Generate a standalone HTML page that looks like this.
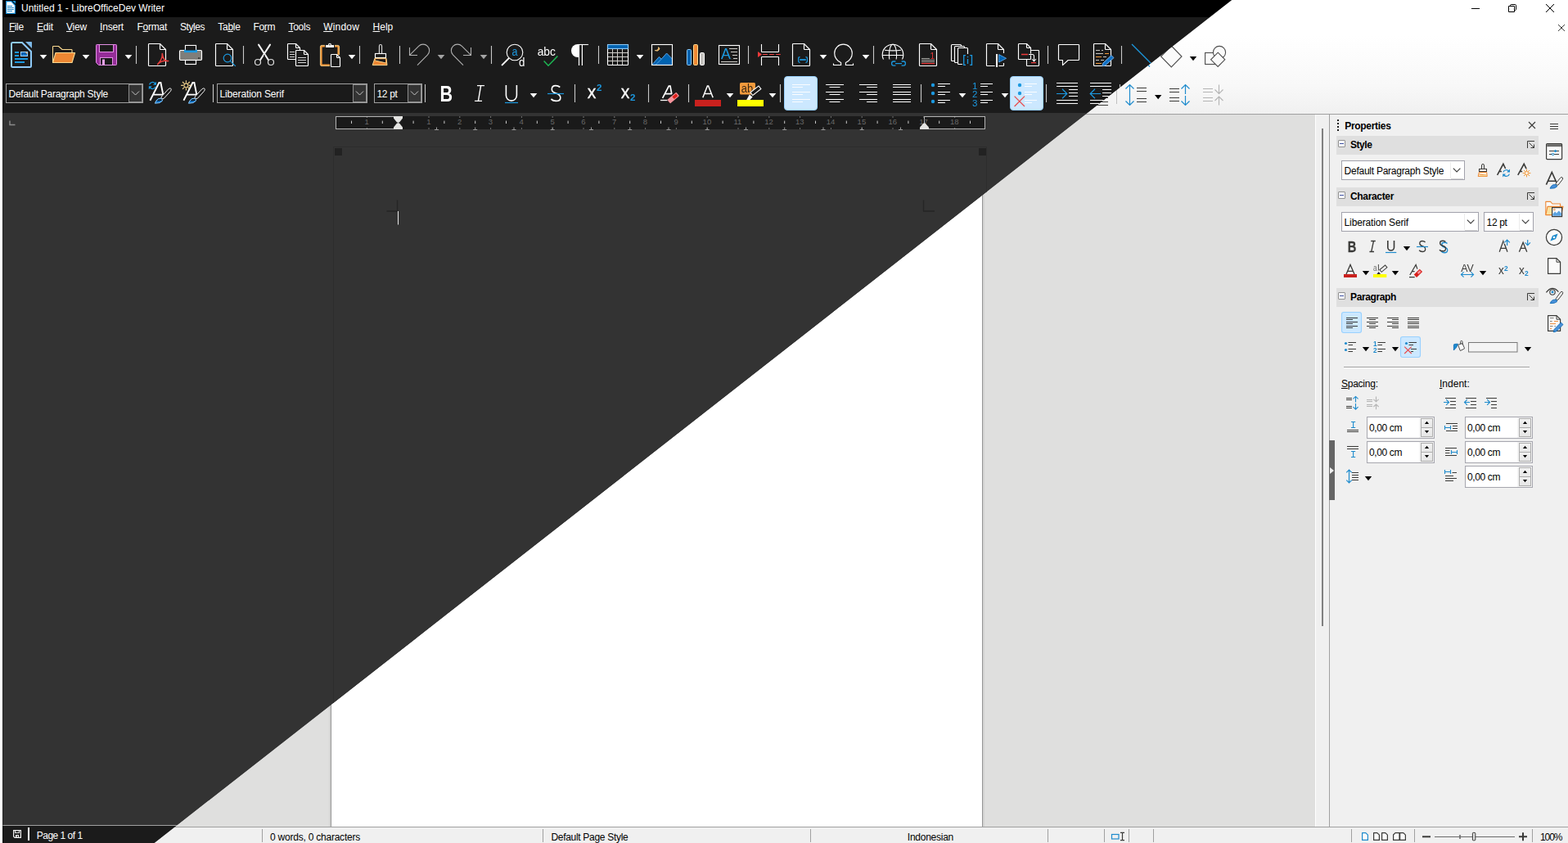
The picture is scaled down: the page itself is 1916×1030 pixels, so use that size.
<!DOCTYPE html>
<html lang="en"><head><meta charset="utf-8"><title>Untitled 1 - LibreOfficeDev Writer</title>
<style>
html,body{margin:0;padding:0;background:#f0f0f0;}
body{width:1916px;height:1030px;overflow:hidden;position:relative;font:12px/16px "Liberation Sans", sans-serif;}
.layer{position:absolute;left:0;top:0;width:1916px;height:1030px;overflow:hidden;}
#dark{clip-path:polygon(3px 0px, 1505px 0px, 188.4px 1030px, 3px 1030px);background:#333;}
#light{background:#f0f0f0;}
.b{position:absolute;}
.t{position:absolute;white-space:pre;font:12px/16px "Liberation Sans", sans-serif;}
.t u{text-decoration:underline;text-underline-offset:1px;text-decoration-thickness:1px;}
svg.ic{position:absolute;left:0;top:0;will-change:transform;}
</style></head><body>
<div class="layer" id="light">
<div class="b" style="left:0px;top:0px;width:1916px;height:24px;background:#fff;"></div>
<div class="b" style="left:0px;top:24px;width:1916px;height:115px;background:linear-gradient(#fff 0%,#fff 17%,#fbfbfb 49%,#f8f8f8 70%,#f4f4f4 86%,#f0f0f0 100%);"></div>
<div class="b" style="left:0px;top:139px;width:1916px;height:1px;background:#a0a0a0;"></div>
<div class="b" style="left:0px;top:140px;width:1607px;height:870px;background:#dfdfde;"></div>
<div class="b" style="left:1607px;top:140px;width:1px;height:870px;background:#fff;"></div>
<div class="b" style="left:1608px;top:140px;width:16px;height:870px;background:#f0f0f0;"></div>
<div class="b" style="left:1624px;top:140px;width:1px;height:870px;background:#a0a0a0;"></div>
<div class="b" style="left:1615px;top:157px;width:2px;height:608px;background:#808080;"></div>
<div class="b" style="left:1625px;top:140px;width:291px;height:870px;background:#f0f0f0;"></div>
<div class="b" style="left:0px;top:1010px;width:1916px;height:1px;background:#a0a0a0;"></div>
<div class="b" style="left:0px;top:1011px;width:1916px;height:19px;background:#f0f0f0;"></div>
<div class="b" style="left:402px;top:180px;width:2px;height:830px;background:#d3d3d2;"></div>
<div class="b" style="left:1201px;top:180px;width:2px;height:830px;background:#d3d3d2;"></div>
<div class="b" style="left:404px;top:180px;width:797px;height:830px;background:#fff;border:1px solid #959595;box-sizing:border-box;border-bottom:none;"></div>
<div class="b" style="left:1633px;top:166px;width:247px;height:23px;background:#dfdfdf;"></div>
<div class="b" style="left:1635px;top:171px;width:9px;height:9px;background:#fff;border:1px solid #909090;box-sizing:border-box;border-radius:1px;"></div>
<div class="b" style="left:1637px;top:175px;width:5px;height:1px;background:#3b4fa0;"></div>
<div class="b" style="left:1633px;top:229px;width:247px;height:23px;background:#dfdfdf;"></div>
<div class="b" style="left:1635px;top:234px;width:9px;height:9px;background:#fff;border:1px solid #909090;box-sizing:border-box;border-radius:1px;"></div>
<div class="b" style="left:1637px;top:238px;width:5px;height:1px;background:#3b4fa0;"></div>
<div class="b" style="left:1633px;top:352px;width:247px;height:23px;background:#dfdfdf;"></div>
<div class="b" style="left:1635px;top:357px;width:9px;height:9px;background:#fff;border:1px solid #909090;box-sizing:border-box;border-radius:1px;"></div>
<div class="b" style="left:1637px;top:361px;width:5px;height:1px;background:#3b4fa0;"></div>
<div class="b" style="left:1639px;top:196px;width:151px;height:24px;background:#fff;border:1px solid #a2a2ac;box-sizing:border-box;"></div>
<div class="b" style="left:1772px;top:198px;width:1px;height:20px;background:#ececec;"></div>
<div class="b" style="left:1773px;top:218px;width:15px;height:1px;background:#d4d4d4;"></div>
<div class="b" style="left:1639px;top:259px;width:168px;height:24px;background:#fff;border:1px solid #a2a2ac;box-sizing:border-box;"></div>
<div class="b" style="left:1789px;top:261px;width:1px;height:20px;background:#ececec;"></div>
<div class="b" style="left:1790px;top:281px;width:15px;height:1px;background:#d4d4d4;"></div>
<div class="b" style="left:1813px;top:259px;width:61px;height:24px;background:#fff;border:1px solid #a2a2ac;box-sizing:border-box;"></div>
<div class="b" style="left:1856px;top:261px;width:1px;height:20px;background:#ececec;"></div>
<div class="b" style="left:1857px;top:281px;width:15px;height:1px;background:#d4d4d4;"></div>
<div class="b" style="left:1670px;top:509px;width:83px;height:27px;background:#fff;border:1px solid #a6a6ae;box-sizing:border-box;"></div>
<div class="b" style="left:1734px;top:510px;width:18px;height:25px;background:#f3f3f3;"></div>
<div class="b" style="left:1736px;top:511px;width:15px;height:12px;border:1px solid #adadad;box-sizing:border-box;background:linear-gradient(#f2f2f2,#e8e8e8);"></div>
<div class="b" style="left:1736px;top:522px;width:15px;height:12px;border:1px solid #adadad;box-sizing:border-box;background:linear-gradient(#f0f0f0,#e6e6e6);"></div>
<div class="b" style="left:1670px;top:539px;width:83px;height:27px;background:#fff;border:1px solid #a6a6ae;box-sizing:border-box;"></div>
<div class="b" style="left:1734px;top:540px;width:18px;height:25px;background:#f3f3f3;"></div>
<div class="b" style="left:1736px;top:541px;width:15px;height:12px;border:1px solid #adadad;box-sizing:border-box;background:linear-gradient(#f2f2f2,#e8e8e8);"></div>
<div class="b" style="left:1736px;top:552px;width:15px;height:12px;border:1px solid #adadad;box-sizing:border-box;background:linear-gradient(#f0f0f0,#e6e6e6);"></div>
<div class="b" style="left:1790px;top:509px;width:83px;height:27px;background:#fff;border:1px solid #a6a6ae;box-sizing:border-box;"></div>
<div class="b" style="left:1854px;top:510px;width:18px;height:25px;background:#f3f3f3;"></div>
<div class="b" style="left:1856px;top:511px;width:15px;height:12px;border:1px solid #adadad;box-sizing:border-box;background:linear-gradient(#f2f2f2,#e8e8e8);"></div>
<div class="b" style="left:1856px;top:522px;width:15px;height:12px;border:1px solid #adadad;box-sizing:border-box;background:linear-gradient(#f0f0f0,#e6e6e6);"></div>
<div class="b" style="left:1790px;top:539px;width:83px;height:27px;background:#fff;border:1px solid #a6a6ae;box-sizing:border-box;"></div>
<div class="b" style="left:1854px;top:540px;width:18px;height:25px;background:#f3f3f3;"></div>
<div class="b" style="left:1856px;top:541px;width:15px;height:12px;border:1px solid #adadad;box-sizing:border-box;background:linear-gradient(#f2f2f2,#e8e8e8);"></div>
<div class="b" style="left:1856px;top:552px;width:15px;height:12px;border:1px solid #adadad;box-sizing:border-box;background:linear-gradient(#f0f0f0,#e6e6e6);"></div>
<div class="b" style="left:1790px;top:569px;width:83px;height:27px;background:#fff;border:1px solid #a6a6ae;box-sizing:border-box;"></div>
<div class="b" style="left:1854px;top:570px;width:18px;height:25px;background:#f3f3f3;"></div>
<div class="b" style="left:1856px;top:571px;width:15px;height:12px;border:1px solid #adadad;box-sizing:border-box;background:linear-gradient(#f2f2f2,#e8e8e8);"></div>
<div class="b" style="left:1856px;top:582px;width:15px;height:12px;border:1px solid #adadad;box-sizing:border-box;background:linear-gradient(#f0f0f0,#e6e6e6);"></div>
<div class="b" style="left:1624px;top:538px;width:7px;height:73px;background:#666;"></div>
<div class="b" style="left:320px;top:1013px;width:1px;height:16px;background:#a0a0a0;"></div>
<div class="b" style="left:663px;top:1013px;width:1px;height:16px;background:#a0a0a0;"></div>
<div class="b" style="left:990px;top:1013px;width:1px;height:16px;background:#a0a0a0;"></div>
<div class="b" style="left:1280px;top:1013px;width:1px;height:16px;background:#a0a0a0;"></div>
<div class="b" style="left:1349px;top:1013px;width:1px;height:16px;background:#a0a0a0;"></div>
<div class="b" style="left:1379px;top:1013px;width:1px;height:16px;background:#a0a0a0;"></div>
<div class="b" style="left:1409px;top:1013px;width:1px;height:16px;background:#a0a0a0;"></div>
<div class="b" style="left:1651px;top:1013px;width:1px;height:16px;background:#a0a0a0;"></div>
<div class="b" style="left:1728px;top:1013px;width:1px;height:16px;background:#a0a0a0;"></div>
<div class="b" style="left:1872px;top:1013px;width:1px;height:16px;background:#a0a0a0;"></div>
<div class="b" style="left:1642px;top:448px;width:227px;height:1px;background:#a0a0a0;"></div>
<div class="b" style="left:1642px;top:449px;width:227px;height:1px;background:#fff;"></div>
<span class="t" style="left:1643.2px;top:145.74px;color:#000;letter-spacing:-0.296px;font-weight:bold;">Properties</span>
<span class="t" style="left:1650px;top:168.84px;color:#000;letter-spacing:-0.438px;font-weight:bold;">Style</span>
<span class="t" style="left:1650px;top:231.84px;color:#000;letter-spacing:-0.337px;font-weight:bold;">Character</span>
<span class="t" style="left:1650px;top:354.84px;color:#000;letter-spacing:-0.373px;font-weight:bold;">Paragraph</span>
<span class="t" style="left:1642.6px;top:200.84px;color:#000;letter-spacing:-0.257px;">Default Paragraph Style</span>
<span class="t" style="left:1642.6px;top:263.84px;color:#000;letter-spacing:-0.145px;">Liberation Serif</span>
<span class="t" style="left:1816.6px;top:263.84px;color:#000;letter-spacing:-0.341px;">12 pt</span>
<span class="t" style="left:1639px;top:460.84px;color:#000;letter-spacing:-0.250px;"><u>S</u>pacing:</span>
<span class="t" style="left:1759px;top:460.84px;color:#000;letter-spacing:0.014px;"><u>I</u>ndent:</span>
<span class="t" style="left:1673px;top:514.84px;color:#000;letter-spacing:-0.384px;">0,00 cm</span>
<span class="t" style="left:1673px;top:544.84px;color:#000;letter-spacing:-0.384px;">0,00 cm</span>
<span class="t" style="left:1793px;top:514.84px;color:#000;letter-spacing:-0.384px;">0,00 cm</span>
<span class="t" style="left:1793px;top:544.84px;color:#000;letter-spacing:-0.384px;">0,00 cm</span>
<span class="t" style="left:1793px;top:574.84px;color:#000;letter-spacing:-0.384px;">0,00 cm</span>
<span class="t" style="left:330px;top:1014.54px;color:#000;letter-spacing:-0.225px;">0 words, 0 characters</span>
<span class="t" style="left:673.4px;top:1014.54px;color:#000;letter-spacing:-0.300px;">Default Page Style</span>
<span class="t" style="left:1108.8px;top:1014.54px;color:#000;letter-spacing:-0.252px;">Indonesian</span>
<span class="t" style="left:1882px;top:1014.54px;color:#000;letter-spacing:-1.076px;">100%</span>
<svg class="ic" width="1916" height="1030" viewBox="0 0 1916 1030">
<path d="M1775.8 205.6l4.3 4.3l4.3 -4.3" fill="none" stroke="#3c3c3c" stroke-width="1.1" />
<path d="M1792.8 268.6l4.3 4.3l4.3 -4.3" fill="none" stroke="#3c3c3c" stroke-width="1.1" />
<path d="M1859.8 268.6l4.3 4.3l4.3 -4.3" fill="none" stroke="#3c3c3c" stroke-width="1.1" />
<path d="M1740.9 518h5.2l-2.6 -3.2z" fill="#000" />
<path d="M1740.9 526h5.2l-2.6 3.2z" fill="#000" />
<path d="M1740.9 548h5.2l-2.6 -3.2z" fill="#000" />
<path d="M1740.9 556h5.2l-2.6 3.2z" fill="#000" />
<path d="M1860.9 518h5.2l-2.6 -3.2z" fill="#000" />
<path d="M1860.9 526h5.2l-2.6 3.2z" fill="#000" />
<path d="M1860.9 548h5.2l-2.6 -3.2z" fill="#000" />
<path d="M1860.9 556h5.2l-2.6 3.2z" fill="#000" />
<path d="M1860.9 578h5.2l-2.6 -3.2z" fill="#000" />
<path d="M1860.9 586h5.2l-2.6 3.2z" fill="#000" />
<path d="M1625 571l5 4l-5 4z" fill="#f0f0f0" />
<path d="M1798 10.5H1808" fill="none" stroke="#000" stroke-width="1" />
<path d="M1843.5 7.5H1850.5V14.5H1843.5Z M1845.5 7.5V6.6Q1845.5 5.5 1846.6 5.5H1851.4Q1852.5 5.5 1852.5 6.6V11.4Q1852.5 12.5 1851.4 12.5H1850.5" fill="none" stroke="#000" stroke-width="1" stroke-linejoin="round"/>
<path d="M1889 5L1899 15M1899 5L1889 15" fill="none" stroke="#000" stroke-width="1" />
<path d="M1904 30L1912 38M1912 30L1904 38" fill="none" stroke="#3a3a38" stroke-width="1" />
<path d="M1379.5 56L1405 81.5" stroke="#1e8bcd" stroke-width="1.2" fill="none" />
<path d="M1431.3 56L1444 69L1431.3 82L1418.6 69Z" fill="#fafafa" stroke="#4d4d4d" stroke-width="1.1" />
<path d="M1453.8 69h8.4l-4.2 5.2z" fill="#000"/>
<rect x="1472.6" y="64.5" width="13" height="14" fill="#fafafa" stroke="#4d4d4d" stroke-width="1.1" />
<circle cx="1490" cy="64" r="7.6" fill="#fafafa" stroke="#4d4d4d" stroke-width="1.1" />
<path d="M1488.2 64.2L1496.8 72.8L1488.2 81.4L1479.6 72.8Z" fill="#fafafa" stroke="#4d4d4d" stroke-width="1.1" />
<path d="M1364.5 105L1364.5 127" stroke="#c0c0c0" stroke-width="1" fill="none" />
<path d="M1329 103.5H1354M1329 107.5H1354M1344 111.5H1354M1344 115.5H1354M1344 119.5H1354M1329 124.5H1354M1329 128.5H1354" fill="none" stroke="#3a3a38" stroke-width="1.1" />
<path d="M1342 116.5H1329.5 M1335 110.8L1329.2 116.5L1335 122.2" fill="none" stroke="#1e8bcd" stroke-width="1.2" />
<path d="M1380.5 103.5V128.5 M1375.5 108.5L1380.5 103.5L1385.5 108.5 M1375.5 123.5L1380.5 128.5L1385.5 123.5" fill="none" stroke="#1e8bcd" stroke-width="1.2" />
<path d="M1389 107.5H1401M1389 111.5H1401M1389 120.5H1401M1389 124.5H1401" fill="none" stroke="#3a3a38" stroke-width="1.1" />
<path d="M1411.0 116h8.4l-4.2 5.2z" fill="#000"/>
<path d="M1429 108.5H1441M1429 112.5H1441M1429 119.5H1441M1429 123.5H1441" fill="none" stroke="#3a3a38" stroke-width="1.1" />
<path d="M1448.5 103.5V115 M1443.5 108.5L1448.5 103.5L1453.5 108.5 M1448.5 117V128.5 M1443.5 123.5L1448.5 128.5L1453.5 123.5" fill="none" stroke="#1e8bcd" stroke-width="1.2" />
<path d="M1470 108.5H1482M1470 112.5H1482M1470 119.5H1482M1470 123.5H1482" fill="none" stroke="#b4b4b4" stroke-width="1.1" />
<path d="M1489.5 103.5V114.5 M1484.5 109.5L1489.5 114.5L1494.5 109.5 M1489.5 118V128.5 M1484.5 123L1489.5 118L1494.5 123" fill="none" stroke="#b4b4b4" stroke-width="1.1" />
<rect x="1634" y="146" width="2" height="2" fill="#222" />
<rect x="1634" y="150" width="2" height="2" fill="#222" />
<rect x="1634" y="154" width="2" height="2" fill="#222" />
<rect x="1634" y="158" width="2" height="2" fill="#222" />
<path d="M1868 149L1876 157M1876 149L1868 157" fill="none" stroke="#3a3a38" stroke-width="1.1" />
<path d="M1894 151.5H1904M1894 154.5H1904M1894 157.5H1904" fill="none" stroke="#3a3a38" stroke-width="1.1" />
<path d="M1866.5 181V172.5H1875 M1868.5 174.5L1874.5 180.5 M1870.5 180.5H1874.5V176.5" fill="none" stroke="#3a3a38" stroke-width="1" />
<path d="M1866.5 244V235.5H1875 M1868.5 237.5L1874.5 243.5 M1870.5 243.5H1874.5V239.5" fill="none" stroke="#3a3a38" stroke-width="1" />
<path d="M1866.5 367V358.5H1875 M1868.5 360.5L1874.5 366.5 M1870.5 366.5H1874.5V362.5" fill="none" stroke="#3a3a38" stroke-width="1" />
<path d="M1810.5 206.5V201.8Q1810.5 200.5 1812 200.5Q1813.5 200.5 1813.5 201.8V206.5" fill="#e8e8e8" stroke="#3a3a38" stroke-width="1" /><rect x="1807.5" y="206.5" width="9" height="3" fill="#fff" stroke="#3a3a38" stroke-width="1" /><path d="M1807.3 210.5H1816.7L1817.2 215.5H1806.2Z" fill="#fdf0d8" stroke="#ed8733" stroke-width="1" stroke-linejoin="round"/><path d="M1807.5 213L1816.5 214.2" fill="none" stroke="#ed8733" stroke-width="0.9" /><rect x="1807.6" y="214.2" width="8.8" height="1" fill="#f8dc90" />
<path d="M1829.6 213.8L1836.9 200.3L1839.64 206 M1831.93 209.5H1834.93" fill="none" stroke="#3a3a38" stroke-width="1.6" stroke-linejoin="miter"/><path d="M1836.8 210.4A4 4 0 0 1 1843.6 209 M1844.4 212.6A4 4 0 0 1 1837.6 214" fill="none" stroke="#1e8bcd" stroke-width="1.2" /><path d="M1845 206.6V210.4H1841.2Z M1836.2 216.4V212.6H1840Z" fill="#1e8bcd" />
<path d="M1854.8 213.8L1862.2 200.3L1865.08 206.2 M1857.16 209.5H1860.16" fill="none" stroke="#3a3a38" stroke-width="1.6" stroke-linejoin="miter"/><path d="M1865.5 206.6V216.4M1860.6 211.5H1870.4M1862 208L1869 215M1869 208L1862 215" fill="none" stroke="#f39a3c" stroke-width="1" /><circle cx="1865.5" cy="211.5" r="1.9" fill="#fff" stroke="#f39a3c" stroke-width="1" />
<text x="1652.1" y="308" font-family="Liberation Sans, sans-serif" font-size="19.2" fill="#3a3a38" font-weight="bold" font-style="normal" text-anchor="middle" textLength="10.6" lengthAdjust="spacingAndGlyphs" stroke="#3a3a38" stroke-width=".3">B</text>
<path d="M1675.2 294.5H1680.8 M1673.4 307.5H1679 M1678.5 294.5L1675.7 307.5" fill="none" stroke="#3a3a38" stroke-width="1.3" />
<path d="M1695.8 294V302.2A3.85 3.85 0 0 0 1703.5 302.2V294" fill="none" stroke="#3a3a38" stroke-width="1.6" />
<path d="M1693 308.5L1706.3 308.5" stroke="#1e8bcd" stroke-width="1.2" fill="none" />
<path d="M1714.8 301h8.4l-4.2 5.2z" fill="#000"/>
<g transform="translate(1738 301) scale(0.84 0.96)"><path d="M4.2 -5.4Q2.6 -6.8 0 -6.8Q-3.8 -6.8 -3.8 -3.8Q-3.8 -1.2 0 -.4Q4.4 .6 4.4 3.6Q4.4 6.8 0 6.8Q-3 6.8 -4.6 5" stroke="#3a3a38" stroke-width="1.56" fill="none"/></g><path d="M1731 301.5L1745 301.5" stroke="#1e8bcd" stroke-width="1.2" fill="none" />
<g transform="translate(1765 302.4) scale(0.84 0.92)"><path d="M4.2 -5.4Q2.6 -6.8 0 -6.8Q-3.8 -6.8 -3.8 -3.8Q-3.8 -1.2 0 -.4Q4.4 .6 4.4 3.6Q4.4 6.8 0 6.8Q-3 6.8 -4.6 5" stroke="#1e8bcd" stroke-width="1.59" fill="none"/></g><g transform="translate(1762.8 300.6) scale(0.84 0.92)"><path d="M4.2 -5.4Q2.6 -6.8 0 -6.8Q-3.8 -6.8 -3.8 -3.8Q-3.8 -1.2 0 -.4Q4.4 .6 4.4 3.6Q4.4 6.8 0 6.8Q-3 6.8 -4.6 5" stroke="#3a3a38" stroke-width="1.59" fill="none"/></g>
<path d="M1832.2 307.8L1837 294.4L1842 307.8 M1833.78 303.4H1840.36" fill="none" stroke="#3a3a38" stroke-width="1.3" stroke-linejoin="miter"/><rect x="1837.6" y="292.5" width="3" height="5.2" fill="#f0f0f0" /><path d="M1841.6 300V293.2 M1838.4 296.4L1841.6 293.2L1844.8 296.4" fill="none" stroke="#1e8bcd" stroke-width="1.2" />
<path d="M1856.4 307.8L1861.1 296.3L1865.8 307.8 M1858.20 303.4H1864.00" fill="none" stroke="#3a3a38" stroke-width="1.3" stroke-linejoin="miter"/><path d="M1866.7 293V299.6 M1863.5 296.4L1866.7 299.6L1869.9 296.4" fill="none" stroke="#1e8bcd" stroke-width="1.2" />
<path d="M1645 335L1650 323.4L1655 335 M1646.55 331.4H1653.45" fill="none" stroke="#3a3a38" stroke-width="1.3" stroke-linejoin="miter"/><rect x="1642" y="335" width="16" height="4" fill="#c9211e" />
<path d="M1664.8 331h8.4l-4.2 5.2z" fill="#000"/>
<text x="1680.2" y="331.3" font-family="Liberation Sans, sans-serif" font-size="10.4" fill="#6e6e6c" font-weight="normal" font-style="normal" text-anchor="middle" textLength="4.6" lengthAdjust="spacingAndGlyphs">a</text><path d="M1684.4 323V330.6" fill="none" stroke="#4a4a48" stroke-width="1" /><g transform="translate(1690.4 328.2) rotate(-40)"><rect x="-4.4" y="-1.8" width="8.8" height="3.6" fill="#f0f0f0" stroke="#3a3a38" stroke-width="1"/></g><path d="M1682.3 335L1684.7 332L1687 335Z" fill="#2a2a3c" /><rect x="1678" y="335" width="16.3" height="4" fill="#ffff00" />
<path d="M1700.8 331h8.4l-4.2 5.2z" fill="#000"/>
<path d="M1722.8 336L1730.1 323.5L1731.9 328.6 M1725.4 331.6H1728.6 M1722 338.5H1728.7" fill="none" stroke="#3a3a38" stroke-width="1.25" /><g transform="translate(1732.9 333.8) rotate(-44)"><rect x="-4.9" y="-2.4" width="9.8" height="4.8" fill="#d8201c"/><rect x="-.4" y="-1.3" width="4.2" height="2.6" fill="#f7929a"/></g>
<text x="1793" y="332.4" font-family="Liberation Sans, sans-serif" font-size="12.5" fill="#3a3a38" font-weight="normal" font-style="normal" text-anchor="middle" textLength="15.5" lengthAdjust="spacingAndGlyphs">AV</text><path d="M1785.6 335.5H1800.4 M1788.6 332.4L1785.4 335.5L1788.6 338.6 M1797.4 332.4L1800.6 335.5L1797.4 338.6" fill="none" stroke="#1e8bcd" stroke-width="1.1" />
<path d="M1807.8 331h8.4l-4.2 5.2z" fill="#000"/>
<text x="1834.3" y="335" font-family="Liberation Sans, sans-serif" font-size="15.4" fill="#3a3a38" font-weight="normal" font-style="normal" text-anchor="middle" textLength="6.8" lengthAdjust="spacingAndGlyphs">x</text><text x="1840.4" y="331" font-family="Liberation Sans, sans-serif" font-size="8.4" fill="#1e8bcd" font-weight="bold" font-style="normal" text-anchor="middle" >2</text>
<text x="1859.3" y="335" font-family="Liberation Sans, sans-serif" font-size="15.4" fill="#3a3a38" font-weight="normal" font-style="normal" text-anchor="middle" textLength="6.8" lengthAdjust="spacingAndGlyphs">x</text><text x="1865.4" y="337" font-family="Liberation Sans, sans-serif" font-size="8.4" fill="#1e8bcd" font-weight="bold" font-style="normal" text-anchor="middle" >2</text>
<rect x="1639.5" y="381.5" width="24" height="25" fill="#cce8ff" stroke="#99d1ff" stroke-width="1.1" rx="2.5" />
<path d="M1645 388.5H1659M1645 390.5H1653M1645 393.5H1659M1645 395.5H1653M1645 398.5H1659M1645 400.5H1653" fill="none" stroke="#3a3a38" stroke-width="1.1" />
<path d="M1670 388.5H1684M1673 390.5H1681M1670 393.5H1684M1673 395.5H1681M1670 398.5H1684M1673 400.5H1681" fill="none" stroke="#3a3a38" stroke-width="1.1" />
<path d="M1695 388.5H1709M1701 390.5H1709M1695 393.5H1709M1701 395.5H1709M1695 398.5H1709M1701 400.5H1709" fill="none" stroke="#3a3a38" stroke-width="1.1" />
<path d="M1720 388.5H1734M1720 390.5H1734M1720 393.5H1734M1720 395.5H1734M1720 398.5H1734M1720 400.5H1734" fill="none" stroke="#3a3a38" stroke-width="1.1" />
<circle cx="1644.5" cy="419.5" r="1.6" fill="#1e8bcd" /><circle cx="1644.5" cy="427.5" r="1.6" fill="#1e8bcd" />
<path d="M1647.5 418.5H1657M1647.5 421.5H1653M1647.5 426.5H1657M1647.5 429.5H1653" fill="none" stroke="#3a3a38" stroke-width="1.1" />
<path d="M1664.8 424h8.4l-4.2 5.2z" fill="#000"/>
<text x="1680.4" y="423" font-family="Liberation Sans, sans-serif" font-size="8.2" fill="#1e8bcd" font-weight="bold" font-style="normal" text-anchor="middle" >1</text><text x="1680.4" y="431.2" font-family="Liberation Sans, sans-serif" font-size="8.2" fill="#1e8bcd" font-weight="bold" font-style="normal" text-anchor="middle" >2</text>
<path d="M1683.5 418.5H1693M1683.5 421.5H1689M1683.5 426.5H1693M1683.5 429.5H1689" fill="none" stroke="#3a3a38" stroke-width="1.1" />
<path d="M1700.8 424h8.4l-4.2 5.2z" fill="#000"/>
<rect x="1711.5" y="411.5" width="24" height="25" fill="#cce8ff" stroke="#99d1ff" stroke-width="1.1" rx="2.5" />
<circle cx="1718.5" cy="419.5" r="1.6" fill="#1e8bcd" />
<path d="M1721.5 418.5H1731M1721.5 421.5H1727M1724 426.5H1731M1724 429.5H1727" fill="none" stroke="#3a3a38" stroke-width="1.1" />
<path d="M1716.2 423.6L1724.8 432 M1724.8 423.6L1716.2 432" fill="none" stroke="#e9494a" stroke-width="1.1" />
<path d="M1776.4 428V421.6Q1776.4 420.4 1777.8 420.4L1781.4 420.2L1779.6 424.6Z" fill="#1e8bcd" stroke="#0063b1" stroke-width="0.8" /><path d="M1781.6 421.4L1787 419.4L1789.6 425.8L1784.4 428.6Z" fill="#fafafa" stroke="#4d4d4d" stroke-width="1" /><path d="M1784.6 420.6V417.6Q1784.6 416.4 1785.8 416.4Q1787 416.4 1787 417.6V421.4" fill="none" stroke="#4d4d4d" stroke-width="1" />
<rect x="1794.5" y="418.5" width="59.5" height="11.5" fill="#f4f4f4" stroke="#787878" stroke-width="1" />
<path d="M1862.8 424h8.4l-4.2 5.2z" fill="#000"/>
<path d="M1645 486.5H1652M1645 488.5H1652M1645 496.5H1652M1645 498.5H1652" fill="none" stroke="#3a3a38" stroke-width="1.1" /><path d="M1656.5 484.4V491.6 M1653.4 487.4L1656.5 484.4L1659.6 487.4 M1656.5 493V500.2 M1653.4 497.2L1656.5 500.2L1659.6 497.2" fill="none" stroke="#1e8bcd" stroke-width="1.1" />
<path d="M1670 488.5H1677M1670 490.5H1677M1670 494.5H1677M1670 496.5H1677" fill="none" stroke="#b4b4b4" stroke-width="1.1" /><path d="M1681.5 484.4V490.8 M1678.4 487.8L1681.5 490.8L1684.6 487.8 M1681.5 494V500.2 M1678.4 497L1681.5 494L1684.6 497" fill="none" stroke="#b4b4b4" stroke-width="1.1" />
<path d="M1766 486.5H1779M1772 490.5H1779M1772 494.5H1779M1766 498.5H1779" fill="none" stroke="#3a3a38" stroke-width="1.05" /><path d="M1764 491.5H1770.4 M1767.2 488.2L1770.5 491.5L1767.2 494.8" fill="none" stroke="#1e8bcd" stroke-width="1.15" />
<path d="M1791 486.5H1804M1797 490.5H1804M1797 494.5H1804M1791 498.5H1804" fill="none" stroke="#3a3a38" stroke-width="1.05" /><path d="M1796 491.5H1789.6 M1792.8 488.2L1789.5 491.5L1792.8 494.8" fill="none" stroke="#1e8bcd" stroke-width="1.15" />
<path d="M1816 486.5H1829M1822 490.5H1829M1822 494.5H1829M1822 498.5H1829" fill="none" stroke="#3a3a38" stroke-width="1.05" /><path d="M1814 491.5H1820.4 M1817.2 488.2L1820.5 491.5L1817.2 494.8" fill="none" stroke="#1e8bcd" stroke-width="1.15" />
<path d="M1651.0 515.5H1656.1999999999998M1651.0 522.5H1656.1999999999998M1653.6 515.5V522.5" fill="none" stroke="#1e8bcd" stroke-width="1.1" /><path d="M1646 525.5H1660M1646 527.5H1660" fill="none" stroke="#3a3a38" stroke-width="1.1" />
<path d="M1646 545.5H1660M1646 548.5H1660" fill="none" stroke="#3a3a38" stroke-width="1.1" /><path d="M1651.0 551.5H1656.1999999999998M1651.0 558.5H1656.1999999999998M1653.6 551.5V558.5" fill="none" stroke="#1e8bcd" stroke-width="1.1" />
<path d="M1648.5 574.2V589.8 M1645.3 577.4000000000001L1648.5 574.2L1651.7 577.4000000000001 M1645.3 586.5999999999999L1648.5 589.8L1651.7 586.5999999999999" fill="none" stroke="#1e8bcd" stroke-width="1.2" /><path d="M1652 577.5H1660M1652 580.5H1660M1652 583.5H1660M1652 586.5H1660" fill="none" stroke="#3a3a38" stroke-width="1.1" />
<path d="M1667.8 582h8.4l-4.2 5.2z" fill="#000"/>
<path d="M1767 517.5H1781M1775 520.5H1781M1775 523.5H1781M1767 526.5H1781" fill="none" stroke="#3a3a38" stroke-width="1.1" /><path d="M1765.5 519.9V525.1M1772.5 519.9V525.1M1765.5 522.5H1772.5" fill="none" stroke="#1e8bcd" stroke-width="1.1" />
<path d="M1766 547.5H1780M1766 550.5H1771.5M1766 553.5H1771.5M1766 556.5H1780" fill="none" stroke="#3a3a38" stroke-width="1.1" /><path d="M1773.5 549.9V555.1M1780.5 549.9V555.1M1773.5 552.5H1780.5" fill="none" stroke="#1e8bcd" stroke-width="1.1" />
<path d="M1765.5 573.9V579.1M1772.5 573.9V579.1M1765.5 576.5H1772.5" fill="none" stroke="#1e8bcd" stroke-width="1.1" /><path d="M1774.5 577.5H1780M1766 581.5H1776M1766 584.5H1780M1766 587.5H1776" fill="none" stroke="#3a3a38" stroke-width="1.1" />
<rect x="1889.6" y="175.6" width="19" height="19" fill="#fafafa" stroke="#3a3a38" stroke-width="1.2" rx="1" /><rect x="1890.2" y="176.2" width="17.8" height="3" fill="#6a6a68" /><path d="M1893 184.5H1905 M1893 188.5H1905" fill="none" stroke="#3a3a38" stroke-width="1.1" /><circle cx="1900.6" cy="184.5" r="1.5" fill="#1e8bcd" /><circle cx="1897.6" cy="188.5" r="1.3" fill="#f0f0f0" stroke="#1e8bcd" stroke-width="1" />
<path d="M1889.4 225.6L1896.3 210.4L1903.2 225.6 M1891.35 221.3H1901.25" fill="none" stroke="#3a3a38" stroke-width="1.6" stroke-linejoin="miter"/><path d="M1901.6 225.6Q1900.8 225 1901.4 223.8L1906.6 217.4Q1907.8 216 1909 216.8Q1910.2 217.8 1909.2 219.4L1904 226Q1902.8 226.6 1901.6 225.6Z" fill="#fafafa" stroke="#3a3a38" stroke-width="1" /><path d="M1894 230.2Q1895.2 227 1897.8 225.8L1901.4 225.6L1902.6 228Q1900 230.8 1894 230.2Z" fill="#4a90d9" stroke="#0063b1" stroke-width="0.8" />
<path d="M1888.8 262.6V246.4H1894.6L1897 249H1906.6V252" fill="#fafafa" stroke="#ed8733" stroke-width="1.1" stroke-linejoin="round"/><path d="M1891 252.4H1910L1907.6 262.6H1888.8Z" fill="#fbe2a0" stroke="#ed8733" stroke-width="1.1" stroke-linejoin="round"/><rect x="1896.6" y="253.6" width="12" height="11" fill="#fafafa" stroke="#3a3a38" stroke-width="1.2" /><path d="M1897.4 263.8V261.4L1900.2 258.6L1902 260.4L1904.8 257.6L1907.8 260.6V263.8Z" fill="#5ba3e0" /><circle cx="1899.4" cy="256.2" r="0.9" fill="none" stroke="#ed8733" stroke-width="0.8" />
<circle cx="1899" cy="290" r="9.6" fill="#fafafa" stroke="#3a3a38" stroke-width="1.2" /><path d="M1903.6 285.4L1901 292L1894.4 294.6L1897 288Z" fill="#1e8bcd" /><circle cx="1899" cy="290" r="1.3" fill="#fafafa" />
<path d="M1891.6 315.6H1902L1906.6 320.2V334.4H1891.6Z" fill="#fafafa" stroke="#3a3a38" stroke-width="1.2" stroke-linejoin="round"/><path d="M1902 315.6V320.2H1906.6" fill="none" stroke="#3a3a38" stroke-width="1" stroke-linejoin="round"/>
<path d="M1889.4 357.4Q1893 352.4 1897 352.4Q1901 352.4 1904.4 356.6" fill="none" stroke="#3a3a38" stroke-width="1.2" /><circle cx="1897" cy="357" r="3.2" fill="none" stroke="#3a3a38" stroke-width="1.1" /><circle cx="1897" cy="356.8" r="1.5" fill="#1e8bcd" /><path d="M1901.6 366.2Q1900.8 365.6 1901.4 364.6L1906.8 357.2Q1908 355.8 1909.2 356.6Q1910.2 357.4 1909.4 359L1904 366.2Q1902.8 367 1901.6 366.2Z" fill="#fafafa" stroke="#3a3a38" stroke-width="1" /><path d="M1894.2 370.6Q1895.2 367.4 1897.8 366.4L1901.6 366L1902.6 368.6Q1900 371 1894.2 370.6Z" fill="#4a90d9" stroke="#0063b1" stroke-width="0.8" />
<path d="M1891.6 385.6H1902L1906.6 390.2V404.4H1891.6Z" fill="#fafafa" stroke="#3a3a38" stroke-width="1.2" stroke-linejoin="round"/><path d="M1902 385.6V390.2H1906.6" fill="none" stroke="#3a3a38" stroke-width="1" stroke-linejoin="round"/><path d="M1894 388.6H1898.6 M1894 392.6H1896.6 M1894 398.6H1897.6M1899.4 398.6H1901" fill="none" stroke="#7a7a78" stroke-width="1" /><path d="M1899 392.6H1904 M1894 395.6H1901 M1894 401.6H1896.2" fill="none" stroke="#ed8733" stroke-width="1" /><path d="M1907.4 394L1910 396.6L1901.6 405L1898.4 405.8L1899.2 402.4Z" fill="#4a90d9" stroke="#0063b1" stroke-width="0.8" />
<rect x="1358.5" y="1019.5" width="8.5" height="5.5" fill="none" stroke="#1e8bcd" stroke-width="1.2" /><path d="M1369 1017.4H1374M1369 1026.6H1374M1371.5 1017.4V1026.6" fill="none" stroke="#3a3a38" stroke-width="1.2" />
<path d="M1664.6 1017.6H1668.8L1671.4 1020.2V1026.4H1664.6Z" fill="#fafafa" stroke="#1e8bcd" stroke-width="1.2" stroke-linejoin="round"/><path d="M1678.6 1017.6H1682.8L1685.4 1020.2V1026.4H1678.6Z" fill="#fafafa" stroke="#3a3a38" stroke-width="1.2" stroke-linejoin="round"/><path d="M1688.6 1017.6H1692.8L1695.4 1020.2V1026.4H1688.6Z" fill="#fafafa" stroke="#3a3a38" stroke-width="1.2" stroke-linejoin="round"/><path d="M1710 1017.6H1705L1702.6 1020V1026.4H1710Z" fill="#fafafa" stroke="#3a3a38" stroke-width="1.2" stroke-linejoin="round"/><path d="M1710.6 1017.6H1714.8L1717.4 1020.2V1026.4H1710.6Z" fill="#fafafa" stroke="#3a3a38" stroke-width="1.2" stroke-linejoin="round"/>
<path d="M1738 1022.3H1748" fill="none" stroke="#3a3a38" stroke-width="2" /><path d="M1753 1022.5H1851" fill="none" stroke="#6a6a6a" stroke-width="1.2" /><path d="M1784 1020V1025" fill="none" stroke="#6a6a6a" stroke-width="1.6" /><rect x="1799.4" y="1017.4" width="3.4" height="9.4" fill="#e0e0e0" stroke="#3a3a38" stroke-width="1" rx="0.8" /><path d="M1856 1022.3H1866 M1861 1017.3V1027.3" fill="none" stroke="#3a3a38" stroke-width="2" />
</svg>
</div>
<div class="layer" id="dark">
<div class="b" style="left:0px;top:0px;width:1916px;height:21px;background:#000;"></div>
<div class="b" style="left:0px;top:21px;width:1916px;height:117px;background:#1b1b1b;"></div>
<div class="b" style="left:0px;top:138px;width:1916px;height:870px;background:#333;"></div>
<div class="b" style="left:0px;top:1008px;width:1916px;height:1px;background:#a0a0a0;"></div>
<div class="b" style="left:0px;top:1009px;width:1916px;height:21px;background:#1b1b1b;"></div>
<div class="b" style="left:3px;top:0px;width:1px;height:1030px;background:rgba(0,0,0,.3);"></div>
<div class="b" style="left:7px;top:102px;width:168px;height:24px;background:#1a1a1a;border:1px solid #a0a0a0;box-sizing:border-box;"></div>
<div class="b" style="left:157px;top:103px;width:17px;height:22px;background:#333;border:1px solid #8c8c8c;box-sizing:border-box;"></div>
<div class="b" style="left:265px;top:102px;width:184px;height:24px;background:#1a1a1a;border:1px solid #a0a0a0;box-sizing:border-box;"></div>
<div class="b" style="left:431px;top:103px;width:17px;height:22px;background:#333;border:1px solid #8c8c8c;box-sizing:border-box;"></div>
<div class="b" style="left:457px;top:102px;width:59px;height:24px;background:#1a1a1a;border:1px solid #a0a0a0;box-sizing:border-box;"></div>
<div class="b" style="left:498px;top:103px;width:17px;height:22px;background:#333;border:1px solid #8c8c8c;box-sizing:border-box;"></div>
<div class="b" style="left:34px;top:1011px;width:2px;height:16px;background:#fff;"></div>
<div class="b" style="left:410px;top:142px;width:794px;height:16px;background:#1a1a1a;"></div>
<div class="b" style="left:410px;top:142px;width:77px;height:16px;border:1px solid #b4b4b4;box-sizing:border-box;"></div>
<div class="b" style="left:1129px;top:142px;width:75px;height:16px;border:1px solid #b4b4b4;box-sizing:border-box;"></div>
<div class="b" style="left:407px;top:179px;width:799px;height:829px;background:#333;border:1px solid #2d2d2d;box-sizing:border-box;border-bottom:none;"></div>
<div class="b" style="left:409px;top:181px;width:9px;height:9px;background:#222;"></div>
<div class="b" style="left:1195.6px;top:181px;width:9px;height:9px;background:#222;"></div>
<span class="t" style="left:26px;top:1.84px;color:#fff;letter-spacing:-0.018px;">Untitled 1 - LibreOfficeDev Writer</span>
<span class="t" style="left:10.9px;top:24.84px;color:#fff;letter-spacing:-0.386px;"><u>F</u>ile</span>
<span class="t" style="left:45px;top:24.84px;color:#fff;letter-spacing:-0.172px;"><u>E</u>dit</span>
<span class="t" style="left:81px;top:24.84px;color:#fff;letter-spacing:-0.249px;"><u>V</u>iew</span>
<span class="t" style="left:122px;top:24.84px;color:#fff;letter-spacing:-0.169px;"><u>I</u>nsert</span>
<span class="t" style="left:167.4px;top:24.84px;color:#fff;letter-spacing:-0.203px;">F<u>o</u>rmat</span>
<span class="t" style="left:220px;top:24.84px;color:#fff;letter-spacing:-0.415px;">Sty<u>l</u>es</span>
<span class="t" style="left:266.3px;top:24.84px;color:#fff;letter-spacing:-0.298px;">Ta<u>b</u>le</span>
<span class="t" style="left:309.4px;top:24.84px;color:#fff;letter-spacing:-0.300px;">Fo<u>r</u>m</span>
<span class="t" style="left:352.4px;top:24.84px;color:#fff;letter-spacing:-0.243px;"><u>T</u>ools</span>
<span class="t" style="left:395.2px;top:24.84px;color:#fff;letter-spacing:0.185px;"><u>W</u>indow</span>
<span class="t" style="left:455.5px;top:24.84px;color:#fff;letter-spacing:0.028px;"><u>H</u>elp</span>
<span class="t" style="left:10.5px;top:106.54px;color:#fff;letter-spacing:-0.257px;">Default Paragraph Style</span>
<span class="t" style="left:268.5px;top:106.54px;color:#fff;letter-spacing:-0.145px;">Liberation Serif</span>
<span class="t" style="left:460.5px;top:106.54px;color:#fff;letter-spacing:-0.341px;">12 pt</span>
<span class="t" style="left:44.7px;top:1012.64px;color:#fff;letter-spacing:-0.490px;">Page 1 of 1</span>
<span class="t" style="left:445.59999999999997px;top:140.71px;color:#686868;font-size:9.5px;line-height:16px;">1</span>
<span class="t" style="left:521.2px;top:140.71px;color:#686868;font-size:9.5px;line-height:16px;">1</span>
<span class="t" style="left:559.0px;top:140.71px;color:#686868;font-size:9.5px;line-height:16px;">2</span>
<span class="t" style="left:596.8000000000001px;top:140.71px;color:#686868;font-size:9.5px;line-height:16px;">3</span>
<span class="t" style="left:634.6px;top:140.71px;color:#686868;font-size:9.5px;line-height:16px;">4</span>
<span class="t" style="left:672.4000000000001px;top:140.71px;color:#686868;font-size:9.5px;line-height:16px;">5</span>
<span class="t" style="left:710.2px;top:140.71px;color:#686868;font-size:9.5px;line-height:16px;">6</span>
<span class="t" style="left:748.0px;top:140.71px;color:#686868;font-size:9.5px;line-height:16px;">7</span>
<span class="t" style="left:785.8px;top:140.71px;color:#686868;font-size:9.5px;line-height:16px;">8</span>
<span class="t" style="left:823.6px;top:140.71px;color:#686868;font-size:9.5px;line-height:16px;">9</span>
<span class="t" style="left:858.6px;top:140.71px;color:#686868;font-size:9.5px;line-height:16px;">10</span>
<span class="t" style="left:896.4px;top:140.71px;color:#686868;font-size:9.5px;line-height:16px;">11</span>
<span class="t" style="left:934.1999999999999px;top:140.71px;color:#686868;font-size:9.5px;line-height:16px;">12</span>
<span class="t" style="left:971.9999999999999px;top:140.71px;color:#686868;font-size:9.5px;line-height:16px;">13</span>
<span class="t" style="left:1009.7999999999998px;top:140.71px;color:#686868;font-size:9.5px;line-height:16px;">14</span>
<span class="t" style="left:1047.6000000000001px;top:140.71px;color:#686868;font-size:9.5px;line-height:16px;">15</span>
<span class="t" style="left:1085.4px;top:140.71px;color:#686868;font-size:9.5px;line-height:16px;">16</span>
<span class="t" style="left:1123.2px;top:140.71px;color:#686868;font-size:9.5px;line-height:16px;">17</span>
<span class="t" style="left:1161.0px;top:140.71px;color:#686868;font-size:9.5px;line-height:16px;">18</span>
<svg class="ic" width="1916" height="1030" viewBox="0 0 1916 1030">
<path d="M161 111.5l4.5 4.5l4.5 -4.5" fill="none" stroke="#c8c8c8" stroke-width="1" />
<path d="M435 111.5l4.5 4.5l4.5 -4.5" fill="none" stroke="#c8c8c8" stroke-width="1" />
<path d="M502 111.5l4.5 4.5l4.5 -4.5" fill="none" stroke="#c8c8c8" stroke-width="1" />
<path d="M14 53.5Q14 52 15.5 52H27L38 63V80.5Q38 82 36.5 82H15.5Q14 82 14 80.5Z" fill="none" stroke="#8fcbf9" stroke-width="2" /><path d="M31 51H38.2Q39 51 39 51.8V59Z" fill="#7db9e8" /><rect x="18" y="63" width="5" height="2" fill="#1c99e0" /><rect x="18" y="67" width="5" height="2" fill="#1c99e0" /><rect x="18" y="71" width="16" height="2" fill="#1c99e0" /><rect x="18" y="75" width="12" height="2" fill="#1c99e0" /><rect x="25.5" y="63.5" width="8" height="5" fill="#0a5fae" stroke="#9ed2fa" stroke-width="1" /><path d="M26.5 68L29 65.5L30.5 67L31.5 66L33 67.5V68Z" fill="#1c7fd0" /><path d="M31 64H33V66Z" fill="#f39a3c" />
<path d="M48.7 67h8.6l-4.3 5.2z" fill="#ffffff"/>
<path d="M64.5 76.5V57.2Q64.5 56.5 65.2 56.5H71.5L76 60.5H87.3Q88 60.5 88 61.2V64.5" fill="none" stroke="#fbd990" stroke-width="1.1" stroke-linejoin="round"/><path d="M68 64.5H91.6L88 76.5H64.5Z" fill="#ed8733" stroke="#fbd990" stroke-width="1.1" stroke-linejoin="round"/>
<path d="M100.7 67h8.6l-4.3 5.2z" fill="#ffffff"/>
<path d="M117.5 55.3Q117.5 54.5 118.3 54.5H141.7Q142.5 54.5 142.5 55.3V78.7Q142.5 79.5 141.7 79.5H120.5L117.5 76.5Z" fill="#952d98" stroke="#e28fe4" stroke-width="1" /><rect x="121.5" y="54.5" width="17" height="9" fill="#1b1b1b" stroke="#e28fe4" stroke-width="1" /><rect x="122.5" y="70.5" width="15" height="9" fill="#1b1b1b" stroke="#e28fe4" stroke-width="1" /><rect x="125" y="72.5" width="3" height="7" fill="#e8a2ea" />
<path d="M152.7 67h8.6l-4.3 5.2z" fill="#ffffff"/>
<path d="M166.5 56L166.5 78" stroke="#c8c8c8" stroke-width="1.1" fill="none" />
<path d="M182.3 53.5H195.5L202.5 60.5V79.7Q202.5 80.5 201.7 80.5H182.3Q181.5 80.5 181.5 79.7V54.3Q181.5 53.5 182.3 53.5Z" fill="none" stroke="#ffffff" stroke-width="1.15" stroke-linejoin="round"/><path d="M195.5 53.5V59.7Q195.5 60.5 196.3 60.5H202.5" fill="none" stroke="#ffffff" stroke-width="1.15" /><path d="M198.3 65.5C198.6 70 197.6 73.5 192.6 78.6M192.6 78.6C196 75 201 73.6 205.6 74.6M205.6 74.6C201.6 75.2 198.8 71.6 198.3 65.5" fill="none" stroke="#e8403e" stroke-width="1.5" stroke-linecap="round"/>
<rect x="226.5" y="55.5" width="13" height="7" fill="none" stroke="#ffffff" stroke-width="1.15" /><rect x="219.5" y="61.5" width="27" height="12" fill="#7f7e7a" stroke="#ffffff" stroke-width="1.15" rx="1.2" /><rect x="225" y="60.8" width="16" height="3.4" fill="#1c99e0" /><rect x="227.1" y="56.1" width="11.8" height="5.4" fill="#1b1b1b" /><rect x="226.5" y="73.5" width="13" height="5" fill="#1b1b1b" stroke="#ffffff" stroke-width="1.15" /><rect x="242" y="70.4" width="2.2" height="1.2" fill="#1b1b1b" />
<path d="M264.3 53.5H277.5L284.5 60.5V79.7Q284.5 80.5 283.7 80.5H264.3Q263.5 80.5 263.5 79.7V54.3Q263.5 53.5 264.3 53.5Z" fill="none" stroke="#ffffff" stroke-width="1.15" stroke-linejoin="round"/><path d="M277.5 53.5V59.7Q277.5 60.5 278.3 60.5H284.5" fill="none" stroke="#ffffff" stroke-width="1.15" /><circle cx="278" cy="71" r="4.8" fill="#1b1b1b" stroke="#1c99e0" stroke-width="1.2" /><path d="M281.4 74.4L287.8 80.8" stroke="#1c99e0" stroke-width="1.2" fill="none" />
<path d="M297.5 56L297.5 78" stroke="#c8c8c8" stroke-width="1.1" fill="none" />
<path d="M316 54.6L327.8 73 M330 54.6L318.2 73" fill="none" stroke="#f4f4f4" stroke-width="2" stroke-linecap="round"/><circle cx="323" cy="68" r="0.9" fill="#444" /><circle cx="315" cy="76" r="3.5" fill="none" stroke="#e0e0e0" stroke-width="1.2" /><circle cx="331" cy="76" r="3.5" fill="none" stroke="#e0e0e0" stroke-width="1.2" />
<path d="M352.3 53.5H361.5L366.5 58.5V71.7Q366.5 72.5 365.7 72.5H352.3Q351.5 72.5 351.5 71.7V54.3Q351.5 53.5 352.3 53.5Z" fill="none" stroke="#ffffff" stroke-width="1.15" stroke-linejoin="round"/><path d="M361.5 53.5V57.7Q361.5 58.5 362.3 58.5H366.5" fill="none" stroke="#ffffff" stroke-width="1.15" /><path d="M354 63.5H360M354 66.5H360M354 69.5H360" fill="none" stroke="#d4d4d4" stroke-width="1" /><path d="M362.3 61.5H371.5L376.5 66.5V79.7Q376.5 80.5 375.7 80.5H362.3Q361.5 80.5 361.5 79.7V62.3Q361.5 61.5 362.3 61.5Z" fill="#1b1b1b" stroke="#ffffff" stroke-width="1.15" stroke-linejoin="round"/><path d="M371.5 61.5V65.7Q371.5 66.5 372.3 66.5H376.5" fill="none" stroke="#ffffff" stroke-width="1.15" /><path d="M364 70.5H374M364 73.5H374M364 76.5H374" fill="none" stroke="#d4d4d4" stroke-width="1" />
<path d="M397 56.5H393.5Q392.5 56.5 392.5 57.5V78.5Q392.5 79.5 393.5 79.5H403 M409 56.5H412.5Q413.5 56.5 413.5 57.5V67" fill="none" stroke="#f39a3c" stroke-width="2.2" /><path d="M397 55.4H393Q391.4 55.4 391.4 57V79Q391.4 80.6 393 80.6H403 M409 55.4H413Q414.6 55.4 414.6 57V67" fill="none" stroke="#fbd48c" stroke-width="0.8" /><rect x="398" y="55" width="10" height="3" fill="#ffffff" /><circle cx="403" cy="54.6" r="1.4" fill="#1b1b1b" stroke="#ffffff" stroke-width="1.1" /><path d="M405.3 66.5H411.5L415.5 70.5V80.7Q415.5 81.5 414.7 81.5H405.3Q404.5 81.5 404.5 80.7V67.3Q404.5 66.5 405.3 66.5Z" fill="#1b1b1b" stroke="#ffffff" stroke-width="1.15" stroke-linejoin="round"/><path d="M411.5 66.5V69.7Q411.5 70.5 412.3 70.5H415.5" fill="none" stroke="#ffffff" stroke-width="1.15" />
<path d="M425.7 67h8.6l-4.3 5.2z" fill="#ffffff"/>
<path d="M439.5 56L439.5 78" stroke="#c8c8c8" stroke-width="1.1" fill="none" />
<path d="M463.4 65V56.4Q463.4 54.5 465 54.5Q466.6 54.5 466.6 56.4V65" fill="none" stroke="#dcdcdc" stroke-width="1.1" /><rect x="458.5" y="65.5" width="13" height="5" fill="none" stroke="#ffffff" stroke-width="1.15" /><path d="M458 71.2H472L473 79.6H455.2Z" fill="#ed8733" stroke="#fbd990" stroke-width="1" stroke-linejoin="round"/><path d="M459 72.2H471V76.6L459 74Z" fill="#1b1b1b" /><path d="M458.4 74L472.4 77.2" fill="none" stroke="#fbd990" stroke-width="0.9" />
<path d="M488.5 56L488.5 78" stroke="#c8c8c8" stroke-width="1.1" fill="none" />
<g transform="translate(498 51)" ><path d="M12 28.6L24.4 16.2A7.6 7.6 0 0 0 13.6 5.4L2.8 16.2 M2.5 7V16.5H12" fill="none" stroke="#b0b0b0" stroke-width="1.1" /></g>
<path d="M534.7 67h8.6l-4.3 5.2z" fill="#a4a4a4"/>
<g transform="translate(578 51) scale(-1 1)"><path d="M12 28.6L24.4 16.2A7.6 7.6 0 0 0 13.6 5.4L2.8 16.2 M2.5 7V16.5H12" fill="none" stroke="#b0b0b0" stroke-width="1.1" /></g>
<path d="M586.7 67h8.6l-4.3 5.2z" fill="#a4a4a4"/>
<path d="M600.5 56L600.5 78" stroke="#c8c8c8" stroke-width="1.1" fill="none" />
<circle cx="629" cy="64" r="9.8" fill="none" stroke="#ffffff" stroke-width="1.1" /><path d="M621.6 71.4L613.6 79.4" stroke="#ffffff" stroke-width="2" fill="none" stroke-linecap="round"/><text x="629" y="68.2" font-family="Liberation Sans, sans-serif" font-size="15.4" fill="#1c99e0" font-weight="normal" font-style="normal" text-anchor="middle" textLength="7" lengthAdjust="spacingAndGlyphs">a</text><text x="637.6" y="81.2" font-family="Liberation Sans, sans-serif" font-size="15" fill="#ffffff" font-weight="normal" font-style="normal" text-anchor="middle" textLength="7.4" lengthAdjust="spacingAndGlyphs">d</text>
<text x="667.8" y="68.2" font-family="Liberation Sans, sans-serif" font-size="15" fill="#ffffff" font-weight="normal" font-style="normal" text-anchor="middle" textLength="22.2" lengthAdjust="spacingAndGlyphs">abc</text><path d="M664.6 74.6L670 80.2L681.4 68.4" fill="none" stroke="#1db954" stroke-width="1.5" />
<path d="M708 54H706A8 8 0 0 0 706 70H708Z" fill="#ffffff" /><path d="M706 54.5H719" fill="none" stroke="#ffffff" stroke-width="1.1" /><path d="M707.5 54V80 M711.4 54V80" fill="none" stroke="#ffffff" stroke-width="1.2" />
<path d="M731.5 56L731.5 78" stroke="#c8c8c8" stroke-width="1.1" fill="none" />
<path d="M742.5 64.5H767.5M742.5 69.5H767.5M742.5 74.5H767.5 M748.5 60V79.5M754.5 60V79.5M760.5 60V79.5" fill="none" stroke="#cfcdc9" stroke-width="1" /><rect x="742.5" y="54.5" width="25" height="25" fill="none" stroke="#ffffff" stroke-width="1.1" rx="0.8" /><rect x="742.5" y="54.5" width="25" height="5" fill="#0063b1" stroke="#8cc8f6" stroke-width="1.1" />
<path d="M777.7 67h8.6l-4.3 5.2z" fill="#ffffff"/>
<clipPath id="imc"><rect x="797" y="55" width="24" height="24"/></clipPath><g clip-path="url(#imc)"><path d="M796 80L805.4 69.4L808.2 72.2L814.6 65L823 73.6V80Z" fill="#0063b1" stroke="#5aa5e6" stroke-width="1" /><path d="M808.2 72.2L800 80.4" fill="none" stroke="#5aa5e6" stroke-width="1" /></g><rect x="796.5" y="54.5" width="25" height="25" fill="none" stroke="#ffffff" stroke-width="1.1" /><path d="M804.6 57.6A3.6 3.6 0 0 1 800.2 61.6A4.3 4.3 0 0 0 806 60Q806 58.4 804.6 57.6Z" fill="#f0a048" stroke="#fbd990" stroke-width="0.7" />
<rect x="839.5" y="60.5" width="5" height="19" fill="#0063b1" stroke="#8cc8f6" stroke-width="1" rx="1.2" /><rect x="847.5" y="54.5" width="5" height="25" fill="#ed8733" stroke="#fbd990" stroke-width="1" rx="1.2" /><rect x="855.5" y="64.5" width="5" height="15" fill="#c4c2be" stroke="#ffffff" stroke-width="1" rx="1.2" />
<rect x="878.5" y="55.5" width="25" height="23" fill="none" stroke="#ffffff" stroke-width="1.1" /><text x="886.9" y="72" font-family="Liberation Sans, sans-serif" font-size="17.8" fill="#1c99e0" font-weight="normal" font-style="normal" text-anchor="middle" >A</text><path d="M891 59.5H901 M893 63.5H901 M895 67.5H901 M896 71.5H901 M881 75.5H901" fill="none" stroke="#d2d0ca" stroke-width="1" />
<path d="M914.5 56L914.5 78" stroke="#c8c8c8" stroke-width="1.1" fill="none" />
<path d="M930.5 54V62.7Q930.5 63.5 931.3 63.5H950.7Q951.5 63.5 951.5 62.7V54 M930.5 80V70.3Q930.5 69.5 931.3 69.5H950.7Q951.5 69.5 951.5 70.3V80" fill="none" stroke="#ffffff" stroke-width="1.1" /><path d="M932.2 66.5H954.2" fill="none" stroke="#ee3a3a" stroke-width="1.2" stroke-dasharray="5.6 2.4"/><path d="M926 63L931 66.5L926 70Z" fill="#ee3a3a" />
<path d="M969.3 53.5H982.5L989.5 60.5V79.7Q989.5 80.5 988.7 80.5H969.3Q968.5 80.5 968.5 79.7V54.3Q968.5 53.5 969.3 53.5Z" fill="none" stroke="#ffffff" stroke-width="1.15" stroke-linejoin="round"/><path d="M982.5 53.5V59.7Q982.5 60.5 983.3 60.5H989.5" fill="none" stroke="#ffffff" stroke-width="1.15" /><path d="M977.6 69.6Q975.6 69.6 975.6 71.4V74.6Q975.6 76.4 977.6 76.4 M984.4 69.6Q986.4 69.6 986.4 71.4V74.6Q986.4 76.4 984.4 76.4" fill="none" stroke="#1c99e0" stroke-width="1.2" /><path d="M977.2 73H984.8" fill="none" stroke="#1c99e0" stroke-width="1.8" />
<path d="M1001.7 67h8.6l-4.3 5.2z" fill="#ffffff"/>
<path d="M1018.5 77.6V79.5H1027.6V76.6C1022.4 74 1019.7 69.6 1019.7 65A10.8 10.8 0 0 1 1041.3 65C1041.3 69.6 1038.6 74 1033.4 76.6V79.5H1042.5V77.6" fill="none" stroke="#ffffff" stroke-width="1.15" />
<path d="M1053.7 67h8.6l-4.3 5.2z" fill="#ffffff"/>
<path d="M1067.5 56L1067.5 78" stroke="#c8c8c8" stroke-width="1.1" fill="none" />
<clipPath id="gl"><rect x="1076" y="52" width="30" height="20.4"/></clipPath><g clip-path="url(#gl)"><circle cx="1091" cy="67" r="12.8" fill="none" stroke="#ffffff" stroke-width="1.15" /><path d="M1078 67.5H1104 M1081 61.2Q1091 62.6 1101 61.2" fill="none" stroke="#ffffff" stroke-width="1.05" /><ellipse cx="1091" cy="67" rx="4.6" ry="12.8" fill="none" stroke="#ffffff" stroke-width="1.05"/></g><path d="M1094.4 75H1091.8Q1089.6 75 1089.6 77.6Q1089.6 80.2 1091.8 80.2H1094.4 M1101.6 75H1104.2Q1106.4 75 1106.4 77.6Q1106.4 80.2 1104.2 80.2H1101.6" fill="none" stroke="#1c99e0" stroke-width="1.3" /><path d="M1094 77.6H1102" fill="none" stroke="#1c99e0" stroke-width="1.2" />
<path d="M1124.3 53.5H1137.5L1144.5 60.5V79.7Q1144.5 80.5 1143.7 80.5H1124.3Q1123.5 80.5 1123.5 79.7V54.3Q1123.5 53.5 1124.3 53.5Z" fill="none" stroke="#ffffff" stroke-width="1.15" stroke-linejoin="round"/><path d="M1137.5 53.5V59.7Q1137.5 60.5 1138.3 60.5H1144.5" fill="none" stroke="#ffffff" stroke-width="1.15" /><text x="1139.4" y="72" font-family="Liberation Sans, sans-serif" font-size="10" fill="#ee3a3a" font-weight="normal" font-style="normal" text-anchor="middle" >1</text><path d="M1126 71.5H1136 M1126 73.5H1142 M1126 75.5H1142" fill="none" stroke="#a8a8a4" stroke-width="1" /><path d="M1126 77.6H1142" fill="none" stroke="#ee3a3a" stroke-width="1.3" />
<rect x="1162.5" y="54.5" width="12" height="20" fill="none" stroke="#ffffff" stroke-width="1.15" rx="1" /><rect x="1166.5" y="56.5" width="12" height="20" fill="#1b1b1b" stroke="#ffffff" stroke-width="1.15" rx="1" /><rect x="1170.5" y="58.5" width="12" height="20" fill="#1b1b1b" stroke="#ffffff" stroke-width="1.15" rx="1" /><rect x="1176" y="66" width="13" height="15" fill="#1b1b1b" /><path d="M1180 67.6H1177.7V79.4H1180 M1185.2 67.6H1187.5V79.4H1185.2" fill="none" stroke="#1c99e0" stroke-width="1.3" /><path d="M1182.5 72V78" fill="none" stroke="#1c99e0" stroke-width="1.3" /><circle cx="1182.5" cy="69.6" r="0.8" fill="#1c99e0" />
<path d="M1206.3 53.5H1219.5L1226.5 60.5V79.7Q1226.5 80.5 1225.7 80.5H1206.3Q1205.5 80.5 1205.5 79.7V54.3Q1205.5 53.5 1206.3 53.5Z" fill="none" stroke="#ffffff" stroke-width="1.15" stroke-linejoin="round"/><path d="M1219.5 53.5V59.7Q1219.5 60.5 1220.3 60.5H1226.5" fill="none" stroke="#ffffff" stroke-width="1.15" /><rect x="1215.6" y="65.6" width="4.8" height="16" fill="#1b1b1b" /><rect x="1219" y="65" width="9" height="12" fill="#1b1b1b" /><rect x="1217" y="66" width="2" height="16" fill="#ffffff" /><path d="M1220.6 66.6L1229.6 71.3L1220.6 76Z" fill="#0063b1" stroke="#5aa5e6" stroke-width="0.9" stroke-linejoin="round"/>
<path d="M1245.3 53.5H1254.5L1259.5 58.5V71.7Q1259.5 72.5 1258.7 72.5H1245.3Q1244.5 72.5 1244.5 71.7V54.3Q1244.5 53.5 1245.3 53.5Z" fill="none" stroke="#ffffff" stroke-width="1.15" stroke-linejoin="round"/><path d="M1254.5 53.5V57.7Q1254.5 58.5 1255.3 58.5H1259.5" fill="none" stroke="#ffffff" stroke-width="1.15" /><path d="M1260 61.5H1268.7Q1269.5 61.5 1269.5 62.3V79.7Q1269.5 80.5 1268.7 80.5H1255.3Q1254.5 80.5 1254.5 79.7V73" fill="none" stroke="#ffffff" stroke-width="1.15" /><path d="M1248 66.5H1256 M1260 76.6H1266" fill="none" stroke="#ee3a3a" stroke-width="1.3" /><rect x="1257" y="65.6" width="5" height="1.8" fill="#1b1b1b" /><rect x="1262.4" y="70" width="2.2" height="3" fill="#1b1b1b" /><path d="M1257 66.5H1261.5Q1263.5 66.5 1263.5 68.5V74.5 M1261 72L1263.5 74.8L1266 72" fill="none" stroke="#ffffff" stroke-width="1.1" />
<path d="M1280.5 56L1280.5 78" stroke="#c8c8c8" stroke-width="1.1" fill="none" />
<path d="M1293.5 55.3Q1293.5 54.5 1294.3 54.5H1317.7Q1318.5 54.5 1318.5 55.3V72.7Q1318.5 73.5 1317.7 73.5H1305.2L1298.5 79.6V73.5H1294.3Q1293.5 73.5 1293.5 72.7Z" fill="none" stroke="#ffffff" stroke-width="1.15" stroke-linejoin="round"/>
<path d="M1337.3 53.5H1350.5L1357.5 60.5V79.7Q1357.5 80.5 1356.7 80.5H1337.3Q1336.5 80.5 1336.5 79.7V54.3Q1336.5 53.5 1337.3 53.5Z" fill="none" stroke="#ffffff" stroke-width="1.15" stroke-linejoin="round"/><path d="M1350.5 53.5V59.7Q1350.5 60.5 1351.3 60.5H1357.5" fill="none" stroke="#ffffff" stroke-width="1.15" /><path d="M1339 61.5H1344M1346 61.5H1348 M1339 65.5H1348 M1348 69.5H1352 M1339 73.5H1343M1345 73.5H1349" fill="none" stroke="#c8c6c2" stroke-width="1.1" /><path d="M1350 65.5H1355 M1339 69.5H1346 M1339 77.5H1346" fill="none" stroke="#f39a3c" stroke-width="1.2" /><path d="M1358 67.6L1361 70.6L1350.4 80L1347 80.8L1347.8 77.2Z" fill="#0e6fc4" stroke="#7cb4ea" stroke-width="1" stroke-linejoin="round"/>
<path d="M1370.5 56L1370.5 78" stroke="#c8c8c8" stroke-width="1.1" fill="none" />
<path d="M1383 54L1409.5 80.5" stroke="#1c99e0" stroke-width="1.2" fill="none" />
<g transform="translate(0 0)"><path d="M183.4 122.8L194.4 101H196.4L199.4 116 M187.6 115.6H199" fill="none" stroke="#ffffff" stroke-width="1.9" stroke-linejoin="miter"/><path d="M197.6 120.4Q196.4 119.4 197.4 118L205.6 109Q207.6 107.2 208.8 108.2Q210 109.4 208.4 111.4L200.4 120.2Q198.8 121.4 197.6 120.4Z" fill="#1b1b1b" stroke="#f4f4f4" stroke-width="1" /><path d="M189.4 126.2Q190.6 122.4 193.4 120.6L197.4 120.2L198.6 123Q196 126.6 189.4 126.2Z" fill="#0e6fc4" stroke="#8cc8f6" stroke-width="1" /><path d="M191.6 123.4L193.6 121.4L197 121L197.8 122.8Z" fill="#1b1b1b" /><path d="M182.6 103.4A4 4 0 0 1 189.6 102 M190.2 105.6A4 4 0 0 1 183.2 107" fill="none" stroke="#1c99e0" stroke-width="1.3" /><path d="M191 99.8V103.8H187Z M181.8 109.2V105.2H185.8Z" fill="#1c99e0" /></g>
<g transform="translate(41 0)"><path d="M183.4 122.8L194.4 101H196.4L199.4 116 M187.6 115.6H199" fill="none" stroke="#ffffff" stroke-width="1.9" stroke-linejoin="miter"/><path d="M197.6 120.4Q196.4 119.4 197.4 118L205.6 109Q207.6 107.2 208.8 108.2Q210 109.4 208.4 111.4L200.4 120.2Q198.8 121.4 197.6 120.4Z" fill="#1b1b1b" stroke="#f4f4f4" stroke-width="1" /><path d="M189.4 126.2Q190.6 122.4 193.4 120.6L197.4 120.2L198.6 123Q196 126.6 189.4 126.2Z" fill="#0e6fc4" stroke="#8cc8f6" stroke-width="1" /><path d="M191.6 123.4L193.6 121.4L197 121L197.8 122.8Z" fill="#1b1b1b" /><circle cx="186.4" cy="104.4" r="2.5" fill="#1b1b1b" stroke="#fbd990" stroke-width="1.1" /><path d="M186.4 98.2V100.8M186.4 108V110.6M180.2 104.4H182.8M190 104.4H192.6M182 100L183.9 101.9M188.9 106.9L190.8 108.8M190.8 100L188.9 101.9M183.9 106.9L182 108.8" fill="none" stroke="#fbd990" stroke-width="1.1" /></g>
<path d="M260.5 103L260.5 125" stroke="#c8c8c8" stroke-width="1.1" fill="none" />
<path d="M519.5 103L519.5 125" stroke="#c8c8c8" stroke-width="1.1" fill="none" />
<text x="545.4" y="124" font-family="Liberation Sans, sans-serif" font-size="28.4" fill="#ffffff" font-weight="bold" font-style="normal" text-anchor="middle" textLength="15.6" lengthAdjust="spacingAndGlyphs">B</text>
<path d="M583 104.6H592 M580 123.4H589 M587.6 104.6L584.4 123.4" fill="none" stroke="#ffffff" stroke-width="1.4" />
<path d="M618.4 104V116.6A6.5 6.5 0 0 0 631.4 116.6V104" fill="none" stroke="#ffffff" stroke-width="1.6" />
<path d="M617 125.5L633 125.5" stroke="#1c99e0" stroke-width="1.2" fill="none" />
<path d="M647.7 114h8.6l-4.3 5.2z" fill="#ffffff"/>
<g transform="translate(679.2 0) scale(.88 1) translate(-679.2 0)"><path d="M685 106.5Q682.5 104.6 679 104.6Q673.6 104.6 673.6 109Q673.6 112.6 679 113.8Q685.6 115.4 685.6 119.4Q685.6 123.4 679.4 123.4Q675 123.4 672.6 121" fill="none" stroke="#ffffff" stroke-width="1.8" /></g>
<path d="M669 114.5L689 114.5" stroke="#1c99e0" stroke-width="1.2" fill="none" />
<path d="M702.5 103L702.5 125" stroke="#c8c8c8" stroke-width="1.1" fill="none" />
<text x="723" y="120.2" font-family="Liberation Sans, sans-serif" font-size="22.6" fill="#ffffff" font-weight="normal" font-style="normal" text-anchor="middle" textLength="10.6" lengthAdjust="spacingAndGlyphs" stroke="#ffffff" stroke-width=".3">x</text>
<text x="732.2" y="111" font-family="Liberation Sans, sans-serif" font-size="11.5" fill="#1c99e0" font-weight="bold" font-style="normal" text-anchor="middle" >2</text>
<text x="764" y="120.2" font-family="Liberation Sans, sans-serif" font-size="22.6" fill="#ffffff" font-weight="normal" font-style="normal" text-anchor="middle" textLength="10.6" lengthAdjust="spacingAndGlyphs" stroke="#ffffff" stroke-width=".3">x</text>
<text x="773.2" y="123" font-family="Liberation Sans, sans-serif" font-size="11.5" fill="#1c99e0" font-weight="bold" font-style="normal" text-anchor="middle" >2</text>
<path d="M792.5 103L792.5 125" stroke="#c8c8c8" stroke-width="1.1" fill="none" />
<path d="M809.6 119.8L817.3 105.2H819L820.8 115 M812.4 114.6H821" fill="none" stroke="#ffffff" stroke-width="1.7" /><path d="M807 122.5H815.5" fill="none" stroke="#ffffff" stroke-width="1.3" />
<g transform="translate(822.6 119.6) rotate(-40)"><rect x="-7.2" y="-2.9" width="14.4" height="5.8" rx=".8" fill="#f6949c"/><rect x="0" y="-1.9" width="6" height="3.8" fill="#dc201a"/></g>
<path d="M841.5 103L841.5 125" stroke="#c8c8c8" stroke-width="1.1" fill="none" />
<path d="M858.8 119.2L864.4 105H865.6L871.2 119.2 M861 114.4H869" fill="none" stroke="#ffffff" stroke-width="1.5" />
<rect x="849" y="122" width="32" height="8" fill="#c9211e" />
<path d="M887.7 114h8.6l-4.3 5.2z" fill="#ffffff"/>
<rect x="904" y="101" width="19" height="14.5" fill="#f39a3c" rx="1.5" />
<text x="913" y="113" font-family="Liberation Sans, sans-serif" font-size="15.5" fill="#3c2a14" font-weight="normal" font-style="normal" text-anchor="middle" textLength="14.4" lengthAdjust="spacingAndGlyphs">ab</text>
<path d="M912.2 122L915.8 115.4L919.6 118.6L916.4 122Z" fill="#f8f8f8" />
<g transform="translate(923.4 110.7) rotate(-38)"><rect x="-6.4" y="-2.3" width="12.8" height="4.6" fill="#1b1b1b" stroke="#ffffff" stroke-width="1.1"/></g>
<rect x="901" y="122" width="32" height="8" fill="#ffff00" />
<path d="M939.7 114h8.6l-4.3 5.2z" fill="#ffffff"/>
<path d="M953.5 103L953.5 125" stroke="#c8c8c8" stroke-width="1.1" fill="none" />
<rect x="958.5" y="93.5" width="40" height="41" fill="#cce8ff" stroke="#99d1ff" stroke-width="1" rx="3.5" />
<path d="M968 103.5H990M968 106.5H981M968 112.5H990M968 115.5H981M968 121.5H990M968 124.5H981" fill="none" stroke="#fafcff" stroke-width="1.15" />
<path d="M1009 103.5H1031M1013.5 106.5H1026.5M1009 112.5H1031M1013.5 115.5H1026.5M1009 121.5H1031M1013.5 124.5H1026.5" fill="none" stroke="#ffffff" stroke-width="1.15" />
<path d="M1050 103.5H1072M1059 106.5H1072M1050 112.5H1072M1059 115.5H1072M1050 121.5H1072M1059 124.5H1072" fill="none" stroke="#ffffff" stroke-width="1.15" />
<path d="M1091 103.5H1113M1091 106.5H1113M1091 112.5H1113M1091 115.5H1113M1091 121.5H1113M1091 124.5H1113" fill="none" stroke="#ffffff" stroke-width="1.15" />
<path d="M1125.5 103L1125.5 125" stroke="#c8c8c8" stroke-width="1.1" fill="none" />
<circle cx="1140" cy="104" r="2.2" fill="#1c99e0" />
<circle cx="1140" cy="114" r="2.2" fill="#1c99e0" />
<circle cx="1140" cy="124" r="2.2" fill="#1c99e0" />
<path d="M1146 102.5H1161M1146 105.5H1155M1146 112.5H1161M1146 115.5H1155M1146 122.5H1161M1146 125.5H1155" fill="none" stroke="#ffffff" stroke-width="1.1" />
<path d="M1171.7 114h8.6l-4.3 5.2z" fill="#ffffff"/>
<text x="1191.3" y="108.8" font-family="Liberation Sans, sans-serif" font-size="11.5" fill="#1c99e0" font-weight="normal" font-style="normal" text-anchor="middle" >1</text>
<text x="1191.3" y="118.8" font-family="Liberation Sans, sans-serif" font-size="11.5" fill="#1c99e0" font-weight="normal" font-style="normal" text-anchor="middle" >2</text>
<text x="1191.3" y="129.6" font-family="Liberation Sans, sans-serif" font-size="11.5" fill="#1c99e0" font-weight="normal" font-style="normal" text-anchor="middle" >3</text>
<path d="M1198 102.5H1213M1198 105.5H1207M1198 112.5H1213M1198 115.5H1207M1198 122.5H1213M1198 125.5H1207" fill="none" stroke="#ffffff" stroke-width="1.2" />
<path d="M1223.7 114h8.6l-4.3 5.2z" fill="#ffffff"/>
<rect x="1234.5" y="93.5" width="40" height="41" fill="#cce8ff" stroke="#99d1ff" stroke-width="1" rx="3.5" />
<circle cx="1246" cy="104" r="2.2" fill="#1c99e0" />
<circle cx="1246" cy="114" r="2.2" fill="#1c99e0" />
<path d="M1252 102.5H1267M1252 105.5H1261M1252 112.5H1267M1252 115.5H1261M1252 122.5H1267M1252 125.5H1261" fill="none" stroke="#fafcff" stroke-width="1.2" />
<path d="M1239.6 117.6L1252 130 M1252 117.6L1239.6 130" fill="none" stroke="#e9494a" stroke-width="1.2" />
<path d="M1278.5 103L1278.5 125" stroke="#c8c8c8" stroke-width="1.1" fill="none" />
<path d="M1291 101.5H1317M1291 105.5H1317M1306 109.5H1317M1306 113.5H1317M1306 117.5H1317M1291 122.5H1317M1291 126.5H1317" fill="none" stroke="#ffffff" stroke-width="1.1" />
<path d="M1291 114.5H1303.5 M1298 108.8L1303.8 114.5L1298 120.2" fill="none" stroke="#1c99e0" stroke-width="1.2" />
<path d="M1332 101.5H1358M1332 105.5H1358M1347 109.5H1358M1347 113.5H1358M1347 117.5H1358M1332 122.5H1358M1332 126.5H1358" fill="none" stroke="#ffffff" stroke-width="1.1" />
<path d="M1345 114.5H1332.5 M1338 108.8L1332.2 114.5L1338 120.2" fill="none" stroke="#1c99e0" stroke-width="1.2" />
<path d="M1368.5 103L1368.5 125" stroke="#c8c8c8" stroke-width="1.1" fill="none" />
<path d="M7.6 1.6H13.8L18.4 6.6V16.4H7.6Z" fill="#fff" stroke="#1489d0" stroke-width="1.2" /><path d="M15.2 1H19V4.8Z" fill="#1c99e0" /><path d="M9 7.5H15M9 9.5H16.8M9 11.5H16.8M9 13.5H15" fill="none" stroke="#1b85c8" stroke-width="1" />
<path d="M12 147.5V152.5H18.5" fill="none" stroke="#8a8a8a" stroke-width="1.4" />
<path d="M429.5 147.6v3.4M467.3 147.6v3.4M505.1 147.6v3.4M542.9 147.6v3.4M580.7 147.6v3.4M618.5 147.6v3.4M656.3 147.6v3.4M694.1 147.6v3.4M731.9 147.6v3.4M769.7 147.6v3.4M807.5 147.6v3.4M845.3 147.6v3.4M883.1 147.6v3.4M920.9 147.6v3.4M958.7 147.6v3.4M996.5 147.6v3.4M1034.3 147.6v3.4M1072.1 147.6v3.4M1109.9 147.6v3.4M1147.7 147.6v3.4M1185.5 147.6v3.4M448.4 142.5v1M448.4 156.5v1M524.0 142.5v1M524.0 156.5v1M561.8 142.5v1M561.8 156.5v1M599.6 142.5v1M599.6 156.5v1M637.4 142.5v1M637.4 156.5v1M675.2 142.5v1M675.2 156.5v1M713.0 142.5v1M713.0 156.5v1M750.8 142.5v1M750.8 156.5v1M788.6 142.5v1M788.6 156.5v1M826.4 142.5v1M826.4 156.5v1M864.2 142.5v1M864.2 156.5v1M902.0 142.5v1M902.0 156.5v1M939.8 142.5v1M939.8 156.5v1M977.6 142.5v1M977.6 156.5v1M1015.4 142.5v1M1015.4 156.5v1M1053.2 142.5v1M1053.2 156.5v1M1091.0 142.5v1M1091.0 156.5v1M1128.8 142.5v1M1128.8 156.5v1M1166.6 142.5v1M1166.6 156.5v1" fill="none" stroke="#c8c8c8" stroke-width="1" />
<path d="M533.5 155.5v3M531.0 158.5h5M580.7 155.5v3M578.2 158.5h5M628.0 155.5v3M625.5 158.5h5M675.2 155.5v3M672.7 158.5h5M722.5 155.5v3M720.0 158.5h5M769.7 155.5v3M767.2 158.5h5M817.0 155.5v3M814.5 158.5h5M864.2 155.5v3M861.7 158.5h5M911.5 155.5v3M909.0 158.5h5M958.7 155.5v3M956.2 158.5h5M1006.0 155.5v3M1003.5 158.5h5M1053.2 155.5v3M1050.7 158.5h5M1100.5 155.5v3M1098.0 158.5h5" fill="none" stroke="#9a9a9a" stroke-width="1" />
<path d="M481 142H492V144.5L488 149.5H485L481 144.5Z M481 158H492V155.5L488 150.5H485L481 155.5Z" fill="#e4e4e2" />
<path d="M1124 158H1135V155.5L1130.5 150.5H1128.5L1124 155.5Z" fill="#e4e4e2" />
<path d="M485.5 244.5V258 M472.4 258H486" fill="none" stroke="#252525" stroke-width="1.3" />
<path d="M1128.5 244.5V258 M1128 258H1142" fill="none" stroke="#252525" stroke-width="1.3" />
<path d="M486.5 258V274.5" fill="none" stroke="#e8e8e8" stroke-width="1" />
<g transform="translate(16 1014)" ><path d="M.6 .6H9.4V9.4H2L.6 8Z" fill="none" stroke="#f0f0f0" stroke-width="1.2" /><rect x="2.6" y="0.6" width="4.8" height="3" fill="none" stroke="#f0f0f0" stroke-width="1" /><rect x="3" y="6" width="4" height="3.4" fill="#f0f0f0" /><rect x="4.6" y="7" width="1.4" height="1.6" fill="#1b1b1b" /></g>
</svg>
</div>
<div class="b" style="left:0;top:0;width:3px;height:1030px;background:#fff"></div>
</body></html>
